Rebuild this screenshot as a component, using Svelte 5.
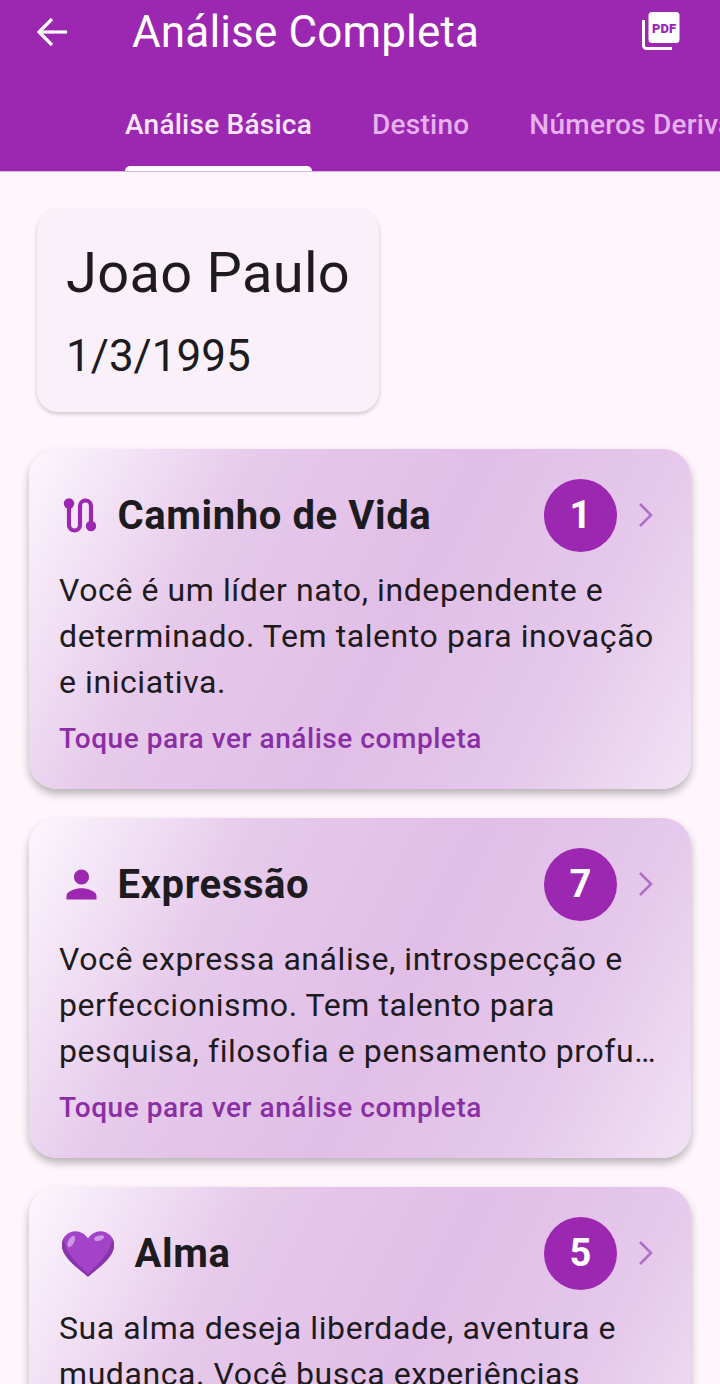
<script lang="ts">
  const tabs = ["Análise Básica", "Destino", "Números Derivados"];

  const cards = [
    {
      icon: "route",
      title: "Caminho de Vida",
      number: 1,
      text: "Você é um líder nato, independente e determinado. Tem talento para inovação e iniciativa.",
    },
    {
      icon: "person",
      title: "Expressão",
      number: 7,
      text: "Você expressa análise, introspecção e perfeccionismo. Tem talento para pesquisa, filosofia e pensamento profu…",
    },
    {
      icon: "heart",
      title: "Alma",
      number: 5,
      text: "Sua alma deseja liberdade, aventura e mudança. Você busca experiências variadas e novas descobertas na vida.",
    },
  ];
</script>

<div class="screen">
  <header class="appbar">
    <div class="toolbar">
      <svg class="back" width="34" height="34" viewBox="0 0 34 34" fill="none" stroke="currentColor" stroke-width="3.2" aria-hidden="true"><path d="M32 17H4"/><path d="M17 4 4 17l13 13"/></svg>
      <h1 class="title">Análise Completa</h1>
      <svg class="pdf" width="38" height="38" viewBox="0 0 38 38" aria-hidden="true">
        <rect x="6.500" y="0" width="31" height="31" rx="3.500" fill="#fff"/>
        <path fill="none" stroke="#fff" stroke-width="3" d="M1.500 8v25.500a3 3 0 0 0 3 3H30"/>
        <text x="22" y="20.500" class="pdf-text" text-anchor="middle">PDF</text>
      </svg>
    </div>
    <nav class="tabs">
      {#each tabs as tab, i}
        <div class="tab" class:active={i === 0}>{tab}</div>
      {/each}
    </nav>
  </header>

  <main class="content">
    <section class="person">
      <div class="person-name">Joao Paulo</div>
      <div class="person-date">1/3/1995</div>
    </section>

    {#each cards as card}
      <article class="card">
        <div class="card-head">
          {#if card.icon === "route"}
            <svg class="card-icon" width="45" height="45" viewBox="0 0 45 45" aria-hidden="true">
              <path fill="none" stroke="#9c27b0" stroke-width="4.200" d="M10 10v22a5.500 5.500 0 0 0 11 0V13a5.500 5.500 0 0 1 11 0v20"/>
              <circle cx="10" cy="10.500" r="5.200" fill="#9c27b0"/>
              <circle cx="32" cy="33" r="5.200" fill="#9c27b0"/>
            </svg>
          {:else if card.icon === "person"}
            <svg class="card-icon" width="45" height="45" viewBox="0 0 24 24" aria-hidden="true">
              <path fill="#9c27b0" d="M12 12c2.210 0 4-1.790 4-4s-1.790-4-4-4-4 1.790-4 4 1.790 4 4 4zm0 2c-2.670 0-8 1.340-8 4v2h16v-2c0-2.660-5.330-4-8-4z"/>
            </svg>
          {:else}
            <svg class="card-emoji" width="54" height="49" viewBox="0 0 58 50" aria-hidden="true">
              <path fill="#a343c8" d="M29 50C20 42 1 30 1 16 1 7 8 1 15.500 1 21 1 26 4 29 9c3-5 8-8 13.500-8C50 1 57 7 57 16c0 14-19 26-28 34z"/>
              <path fill="#8a33ad" d="M29 50C20 42 1 30 1 16c0-3 .8-5.800 2.200-8C3 23 20 38 29 47 38 38 55 23 54.800 8c1.400 2.200 2.200 5 2.200 8 0 14-19 26-28 34z"/>
              <ellipse cx="11" cy="12" rx="3.200" ry="6.500" transform="rotate(28 11 12)" fill="#cf96e4"/>
              <ellipse cx="41" cy="8.500" rx="5.500" ry="2.600" transform="rotate(-18 41 8.500)" fill="#cf96e4"/>
            </svg>
          {/if}
          <h2 class="card-title">{card.title}</h2>
          <div class="badge">{card.number}</div>
          <svg class="chevron" width="20" height="26" viewBox="0 0 20 26" fill="none" stroke="currentColor" stroke-width="2.600" aria-hidden="true"><path d="m2 2 11 11L2 24"/></svg>
        </div>
        <p class="card-text">{card.text}</p>
        <div class="card-link">Toque para ver análise completa</div>
      </article>
    {/each}
  </main>
</div>

<style>
  :global(body) {
    margin: 0;
    background: #fef6fc;
  }

  .screen {
    width: 720px;
    height: 1384px;
    overflow: hidden;
    background: #fef6fc;
    font-family: Roboto, "Liberation Sans", sans-serif;
    color: #1d1b20;
  }

  /* App bar */
  .appbar {
    background: #9c27b0;
    color: #fff;
    height: 172px;
    box-sizing: border-box;
    border-bottom: 1px solid #d9b3e2;
    overflow: hidden;
  }

  .toolbar {
    display: flex;
    align-items: center;
    height: 63px;
    padding: 0 40px 0 35px;
  }

  .title {
    flex: 1;
    margin: 0 0 0 63px;
    font-size: 44px;
    font-weight: 400;
    letter-spacing: 0.15px;
  }

  .pdf {
    margin-top: -1px;
  }

  .pdf-text {
    font-family: Roboto, sans-serif;
    font-size: 13px;
    font-weight: 900;
    fill: #9c27b0;
  }

  .tabs {
    display: flex;
    gap: 60px;
    padding: 40px 0 0 125px;
    white-space: nowrap;
  }

  .tab {
    flex: none;
    height: 68px;
    box-sizing: border-box;
    padding-top: 5px;
    font-size: 28px;
    font-weight: 500;
    letter-spacing: 0.24px;
    color: #e7b1f0;
  }

  .tab.active {
    color: #f6e6fa;
    position: relative;
  }

  .tab.active::after {
    content: "";
    position: absolute;
    left: 0;
    right: 0;
    bottom: 0;
    height: 5px;
    border-radius: 5px 5px 0 0;
    background: #fff;
  }

  /* Content */
  .content {
    padding: 37px 29px 0;
  }

  .person {
    display: inline-block;
    box-sizing: border-box;
    width: 342px;
    height: 203px;
    margin: 0 0 37px 8px;
    padding: 30px 29px;
    border-radius: 21px;
    background: #f9f0f9;
    box-shadow: 0 2px 4px rgba(0, 0, 0, 0.2);
    vertical-align: top;
  }

  .person-name {
    font-size: 56px;
    line-height: 68px;
    letter-spacing: 0.3px;
    white-space: nowrap;
  }

  .person-date {
    margin-top: 23px;
    font-size: 44px;
    line-height: 52px;
  }

  .card {
    box-sizing: border-box;
    height: 339.500px;
    margin-bottom: 29.500px;
    padding: 29.500px 30px 0;
    border-radius: 28px;
    background: linear-gradient(117deg, #fcf7fd 0%, #e6c9eb 28%, #e1bee7 55%, #e5c8eb 78%, #f2e2f5 100%);
    box-shadow: 0 5px 9px rgba(0, 0, 0, 0.28);
  }

  .card-head {
    display: flex;
    align-items: center;
    height: 73px;
    padding-right: 3px;
  }

  .card-icon {
    flex: none;
    margin-right: 14px;
  }

  .card-emoji {
    flex: none;
    margin: 0 20px 0 2px;
  }

  .card-title {
    flex: 1;
    margin: 0 0 0 -0.500px;
    font-size: 40px;
    font-weight: 700;
    letter-spacing: 0.6px;
  }

  .badge {
    flex: none;
    width: 73px;
    height: 73px;
    border-radius: 50%;
    background: #9c27b0;
    color: #fff;
    display: flex;
    align-items: center;
    justify-content: center;
    font-size: 38px;
    font-weight: 700;
  }

  .chevron {
    flex: none;
    margin-left: 21px;
    color: #b16fc7;
  }

  .card-text {
    margin: 15px 0 0;
    font-size: 32px;
    line-height: 46px;
    letter-spacing: 0.58px;
  }

  .card-link {
    margin-top: 16px;
    font-size: 28px;
    line-height: 36px;
    font-weight: 500;
    letter-spacing: 0.55px;
    color: #8a2ea5;
  }
</style>
